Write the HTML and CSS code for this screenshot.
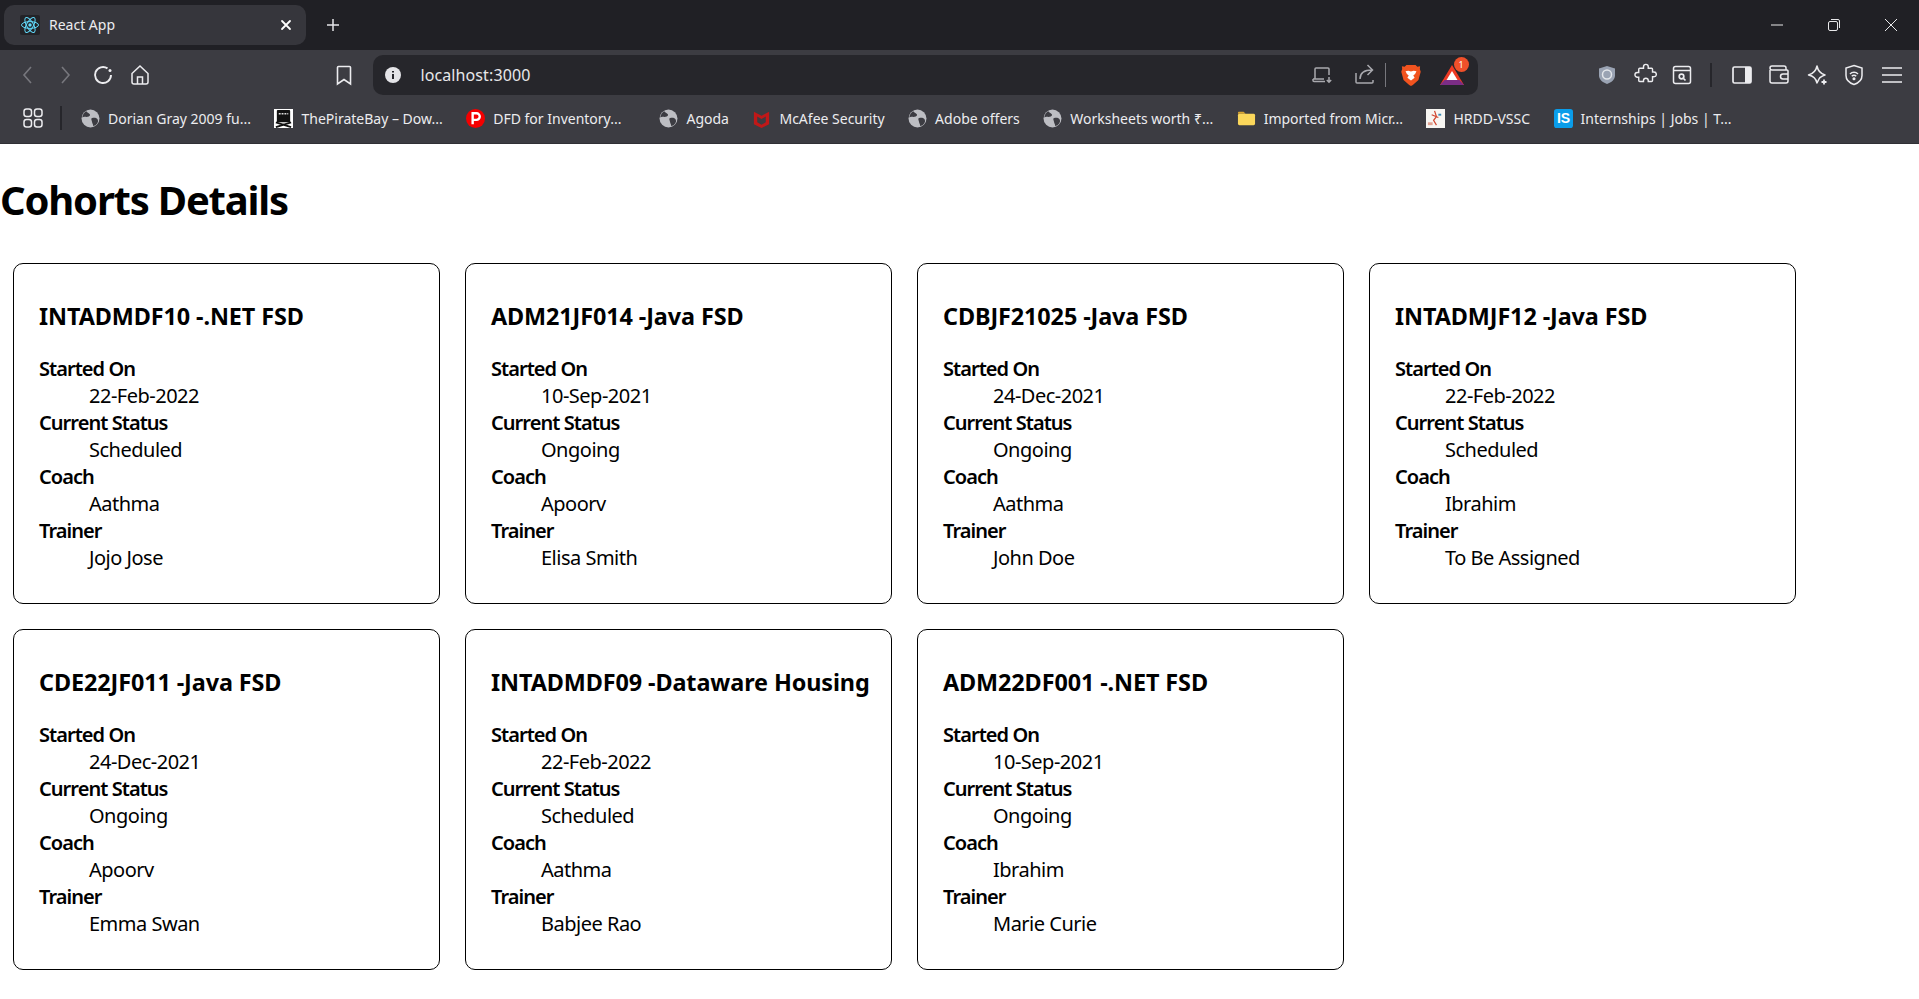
FILE: index.html
```html
<!DOCTYPE html>
<html lang="en">
<head>
<meta charset="utf-8">
<title>React App</title>
<link rel="stylesheet" href="styles.css">
</head>
<body>
<svg class="defs" width="0" height="0" aria-hidden="true">
  <symbol id="globe" viewBox="0 0 18 18">
    <circle cx="9" cy="9" r="8.5" fill="#bdbec3"/>
    <path d="M5 2.2C6 4 8 4 8.5 5.2S7 7.5 5.5 7.5 2.5 7 1.2 8C1.5 5.5 3 3.4 5 2.2ZM10.5 8.5c2-.5 4-.3 5 1 .6.8.8 1.8.5 2.8-.8 2-2.300 3.300-4.500 4 .4-1.500-.8-2.300-1-3.800-.1-1.500-1.500-3.400 0-4Z" fill="#3c3c42"/>
  </symbol>
</svg>
<header class="browser">
  <div class="titlebar">
    <div class="tab">
      <svg class="favicon" viewBox="0 0 20 20"><rect width="20" height="20" rx="2" fill="#232327"/><g fill="none" stroke="#61dafb" stroke-width="1"><ellipse cx="10" cy="10" rx="8.500" ry="3.400"/><ellipse cx="10" cy="10" rx="8.500" ry="3.400" transform="rotate(60 10 10)"/><ellipse cx="10" cy="10" rx="8.500" ry="3.400" transform="rotate(120 10 10)"/></g><circle cx="10" cy="10" r="1.700" fill="#61dafb"/></svg>
      <span class="tab-title">React App</span>
      <svg class="tab-close" viewBox="0 0 12 12"><path d="M2 2l8 8M10 2l-8 8" stroke="#fff" stroke-width="1.800" stroke-linecap="round"/></svg>
    </div>
    <svg class="new-tab" viewBox="0 0 14 14"><path d="M7 1v12M1 7h12" stroke="#e4e4e8" stroke-width="1.500"/></svg>
    <div class="window-controls">
      <svg viewBox="0 0 14 14"><path d="M1 7h12" stroke="#e8e8ea" stroke-width="1"/></svg>
      <svg viewBox="0 0 14 14" fill="none" stroke="#e8e8ea" stroke-width="1"><rect x="1.500" y="3.500" width="9" height="9" rx="1.500"/><path d="M4 1.500h7a1.500 1.500 0 0 1 1.500 1.500v7"/></svg>
      <svg viewBox="0 0 14 14"><path d="M1 1l12 12M13 1L1 13" stroke="#e8e8ea" stroke-width="1"/></svg>
    </div>
  </div>
  <div class="toolbar">
    <div class="nav-group">
      <span class="slot"><svg viewBox="0 0 24 24" fill="none" stroke="#77777d" stroke-width="1.600"><path d="M15 4l-7 8 7 8"/></svg></span>
      <span class="slot"><svg viewBox="0 0 24 24" fill="none" stroke="#77777d" stroke-width="1.600"><path d="M9 4l7 8-7 8"/></svg></span>
      <span class="slot"><svg viewBox="0 0 24 24" fill="none" stroke="#ececef" stroke-width="1.900"><path d="M20 12a8 8 0 1 1-3.500-6.600"/><circle cx="19" cy="7.500" r="1.500" fill="#ececef" stroke="none"/></svg></span>
      <span class="slot"><svg viewBox="0 0 24 24" fill="none" stroke="#ececef" stroke-width="1.500"><path d="M4 10.500L12 3l8 7.500V19a2 2 0 0 1-2 2H6a2 2 0 0 1-2-2Z"/><path d="M9.500 21v-7h5v7"/></svg></span>
    </div>
    <span class="slot slot-bookmark"><svg viewBox="0 0 24 24" fill="none" stroke="#ececef" stroke-width="1.600"><path d="M6.500 3.500h11a1 1 0 0 1 1 1v16.500L12 16.500 5.500 21V4.500a1 1 0 0 1 1-1Z"/></svg></span>
    <div class="address">
      <svg class="info" viewBox="0 0 18 18"><circle cx="9" cy="9" r="8" fill="#e4e4e8"/><path d="M9 8v5M9 5v1.600" stroke="#26262b" stroke-width="2"/></svg>
      <span class="url">localhost:3000</span>
      <span class="slot"><svg viewBox="0 0 24 24" fill="none" stroke="#a9a9ae" stroke-width="1.500"><path d="M5 16V6a1 1 0 0 1 1-1h12a1 1 0 0 1 1 1v6M3 16v1.500a1 1 0 0 0 1 1h11M3 16h11"/><path d="M19 14v5M16.800 17l2.200 2.200 2.200-2.200"/></svg></span>
      <span class="slot"><svg viewBox="0 0 24 24" fill="none" stroke="#a9a9ae" stroke-width="1.500"><path d="M4 10v9a1 1 0 0 0 1 1h15a1 1 0 0 0 1-1v-2"/><path d="M8 17c0-6 4-9 12-9M15.500 3l5 5-5 5" transform="translate(0 -1)"/></svg></span>
      <span class="addr-sep"></span>
      <svg class="brave" viewBox="0 0 22 24"><path d="M6 1h10l2 2 3-.5-.3 3 1 3-2.500 9L13 23l-2 1-2-1-6.200-5.500-2.500-9 1-3-.3-3L4 3Z" fill="#f1531f"/><path d="M5 8l3-.8 3 1 3-1 3 .8-1.500 3-2 1.500 1.500 2.500-4 3-4-3 1.500-2.500-2-1.500Z" fill="#fff"/></svg>
      <span class="bat">
        <svg viewBox="0 0 26 22"><path d="M13 1L25 21H1Z" fill="#ef3a24"/><path d="M1 21l4.500-5h15L25 21Z" fill="#7b2d86"/><path d="M13 7l5.500 9h-11Z" fill="#fff"/></svg>
        <span class="badge">1</span>
      </span>
    </div>
    <div class="tools">
      <span class="slot"><svg viewBox="0 0 24 24"><path d="M12 3l8 2.500v7c0 4-3.500 7-8 8.500-4.500-1.500-8-4.500-8-8.500v-7Z" fill="#9aa3b3"/><circle cx="12" cy="11.500" r="4.500" fill="none" stroke="#e3e6ea" stroke-width="1.500"/></svg></span>
      <span class="slot"><svg viewBox="0 0 24 24" fill="none" stroke="#ececef" stroke-width="1.500"><path d="M10 4.500a2.500 2.500 0 0 1 5 0V6h3.500a1 1 0 0 1 1 1v3H21a2.500 2.500 0 0 1 0 5h-1.500v4a1 1 0 0 1-1 1H15v-1a2.500 2.500 0 0 0-5 0v1H6a1 1 0 0 1-1-1v-3.500H3.500a2.500 2.500 0 0 1 0-5H5V7a1 1 0 0 1 1-1h4Z" transform="translate(1 -.5) scale(.95)"/></svg></span>
      <span class="slot"><svg viewBox="0 0 24 24" fill="none" stroke="#ececef" stroke-width="1.500"><rect x="3.500" y="3.500" width="17" height="17" rx="2"/><path d="M3.500 7.500h17"/><circle cx="11.500" cy="13.500" r="2.300" stroke-width="1.700"/><path d="M13.500 15.500l2 2" stroke-width="1.700"/></svg></span>
      <span class="tool-sep"></span>
      <span class="slot"><svg viewBox="0 0 24 24"><path d="M15 4h5a1 1 0 0 1 1 1v14a1 1 0 0 1-1 1h-5Z" fill="#ececef"/><rect x="3" y="4" width="18" height="16" rx="1.500" fill="none" stroke="#ececef" stroke-width="1.700"/></svg></span>
      <span class="slot"><svg viewBox="0 0 24 24" fill="none" stroke="#ececef" stroke-width="1.500"><path d="M3 7v11a2 2 0 0 0 2 2h14a2 2 0 0 0 2-2V8a1 1 0 0 0-1-1H5a2 2 0 0 1-2-2 2 2 0 0 1 2-2h12a2 2 0 0 1 2 2v2"/><path d="M21 11h-5a2 2 0 0 0 0 5h5"/></svg></span>
      <span class="slot"><svg viewBox="0 0 24 24" fill="none" stroke="#ececef" stroke-width="1.500"><path d="M12 3c1 5 3 7.500 8 9-3 1-5 2-6 4l-2 4c-1-5-3.500-7-8.500-8 5-1.500 7.500-4 8.500-9Z" stroke-linejoin="round"/><path d="M19 16.500v5M16.500 19h5" stroke-width="1.800"/></svg></span>
      <span class="slot"><svg viewBox="0 0 24 24" fill="none" stroke="#ececef" stroke-width="1.500"><path d="M12 2.500l8 2.500v7.500c0 4.500-3.500 7.500-8 9-4.500-1.500-8-4.500-8-9V5Z"/><path d="M8 11a5.500 5.500 0 0 1 8 0M9.800 13.300a3 3 0 0 1 4.400 0"/><circle cx="12" cy="15.800" r=".8" fill="#ececef"/></svg></span>
      <span class="slot"><svg viewBox="0 0 24 24" stroke="#ececef" stroke-width="1.600"><path d="M2 5h20M2 12h20M2 19h20"/></svg></span>
    </div>
  </div>
  <nav class="bookmarks">
    <svg class="apps" viewBox="0 0 22 22" fill="none" stroke="#ececef" stroke-width="1.500"><rect x="2" y="2" width="7.500" height="7.500" rx="2.500"/><rect x="12.500" y="2" width="7.500" height="7.500" rx="2.500"/><rect x="2" y="12.500" width="7.500" height="7.500" rx="2.500"/><rect x="12.500" y="12.500" width="7.500" height="7.500" rx="2.500"/></svg>
    <span class="bm-sep"></span>
    <a class="bm"><svg><use href="#globe"/></svg><span>Dorian Gray 2009 fu...</span></a>
    <a class="bm"><svg viewBox="0 0 20 20"><rect width="20" height="20" fill="#fff"/><rect x="3" y="1" width="14" height="13" rx="1" fill="#111"/><path d="M5 5h10" stroke="#ddd" stroke-dasharray="2 1" stroke-width="1.500"/><path d="M2 14l16 5M18 14L2 19" stroke="#111" stroke-width="2"/></svg><span>ThePirateBay – Dow...</span></a>
    <a class="bm bm-wide"><svg viewBox="0 0 20 20"><circle cx="10" cy="10" r="10" fill="#f40000"/><path d="M7 16V4.500h4a3.500 3.500 0 0 1 0 7H7" fill="none" stroke="#fff" stroke-width="2.500"/></svg><span>DFD for Inventory...</span></a>
    <a class="bm"><svg><use href="#globe"/></svg><span>Agoda</span></a>
    <a class="bm"><svg viewBox="0 0 20 20"><path d="M2 3l8 4 8-4v13l-8 4-8-4Z" fill="#c01818"/><path d="M5.500 8l4.500 2.500L14.500 8v6L10 16.500 5.500 14Z" fill="#3c3c42"/></svg><span>McAfee Security</span></a>
    <a class="bm"><svg><use href="#globe"/></svg><span>Adobe offers</span></a>
    <a class="bm"><svg><use href="#globe"/></svg><span>Worksheets worth ₹...</span></a>
    <a class="bm"><svg viewBox="0 0 20 20"><path d="M1 4a1 1 0 0 1 1-1h5l2 2h-8Z" fill="#d9a531"/><rect x="1" y="5" width="18" height="12" rx="1.500" fill="#fbd75b"/></svg><span>Imported from Micr...</span></a>
    <a class="bm"><svg viewBox="0 0 20 20"><rect width="20" height="20" fill="#f7f5f2"/><path d="M9 2l2 6-3 4 3 5M6 6l7 3" stroke="#d1452f" stroke-width="1.300" fill="none"/><path d="M2 14h5v3H2Z" fill="#e0a090"/><path d="M13 5h3v2h-3Z" fill="#3a8bb5"/></svg><span>HRDD-VSSC</span></a>
    <a class="bm"><svg class="is-icon" viewBox="0 0 20 20"><rect width="20" height="20" rx="3" fill="#0a9dea"/></svg><span class="is-mark">IS</span><span>Internships | Jobs | T...</span></a>
  </nav>
</header>
<main class="page">
  <h1 class="page-title">Cohorts Details</h1>
  <section class="cohorts">
    <article class="card"><h3>INTADMDF10 -.NET FSD</h3><dl><dt>Started On</dt><dd>22-Feb-2022</dd><dt>Current Status</dt><dd>Scheduled</dd><dt>Coach</dt><dd>Aathma</dd><dt>Trainer</dt><dd>Jojo Jose</dd></dl></article>
    <article class="card"><h3>ADM21JF014 -Java FSD</h3><dl><dt>Started On</dt><dd>10-Sep-2021</dd><dt>Current Status</dt><dd>Ongoing</dd><dt>Coach</dt><dd>Apoorv</dd><dt>Trainer</dt><dd>Elisa Smith</dd></dl></article>
    <article class="card"><h3>CDBJF21025 -Java FSD</h3><dl><dt>Started On</dt><dd>24-Dec-2021</dd><dt>Current Status</dt><dd>Ongoing</dd><dt>Coach</dt><dd>Aathma</dd><dt>Trainer</dt><dd>John Doe</dd></dl></article>
    <article class="card"><h3>INTADMJF12 -Java FSD</h3><dl><dt>Started On</dt><dd>22-Feb-2022</dd><dt>Current Status</dt><dd>Scheduled</dd><dt>Coach</dt><dd>Ibrahim</dd><dt>Trainer</dt><dd>To Be Assigned</dd></dl></article>
    <article class="card"><h3>CDE22JF011 -Java FSD</h3><dl><dt>Started On</dt><dd>24-Dec-2021</dd><dt>Current Status</dt><dd>Ongoing</dd><dt>Coach</dt><dd>Apoorv</dd><dt>Trainer</dt><dd>Emma Swan</dd></dl></article>
    <article class="card"><h3>INTADMDF09 -Dataware Housing</h3><dl><dt>Started On</dt><dd>22-Feb-2022</dd><dt>Current Status</dt><dd>Scheduled</dd><dt>Coach</dt><dd>Aathma</dd><dt>Trainer</dt><dd>Babjee Rao</dd></dl></article>
    <article class="card"><h3>ADM22DF001 -.NET FSD</h3><dl><dt>Started On</dt><dd>10-Sep-2021</dd><dt>Current Status</dt><dd>Ongoing</dd><dt>Coach</dt><dd>Ibrahim</dd><dt>Trainer</dt><dd>Marie Curie</dd></dl></article>
  </section>
</main>
</body>
</html>
```
FILE: styles.css
```css
* { box-sizing: border-box; }
html, body { margin: 0; padding: 0; }
body {
  background: #fff;
  color: #000;
  font-family: "Noto Sans", "Open Sans", sans-serif;
  font-size: 20px;
  overflow: hidden;
}
.defs { position: absolute; }

.browser { color: #ececef; font-size: 14px; }
.titlebar {
  height: 50px;
  background: #202025;
  display: flex;
  align-items: center;
  padding-left: 4px;
}
.tab {
  width: 302px;
  height: 40px;
  background: #36363c;
  border-radius: 10px;
  display: flex;
  align-items: center;
  padding: 0 14px 0 16px;
}
.favicon { width: 20px; height: 20px; flex: none; }
.tab-title { margin: -2px 0 0 9px; flex: 1; font-size: 14px; }
.tab-close { width: 12px; height: 12px; }
.new-tab { width: 14px; height: 14px; margin-left: 20px; }
.window-controls {
  margin-left: auto;
  display: flex;
  gap: 43px;
  padding-right: 21px;
}
.window-controls svg { width: 14px; height: 14px; }

.toolbar {
  height: 45px;
  background: #3c3c42;
  display: flex;
  align-items: center;
  padding: 5px 0 0 9px;
}
.slot {
  width: 37.5px;
  height: 24px;
  flex: none;
  display: flex;
  justify-content: center;
}
.slot svg { width: 24px; height: 24px; }
.nav-group { display: flex; }
.slot-bookmark { margin-left: 166px; }
.address {
  width: 1105px;
  height: 40px;
  margin-left: 10px;
  background: #26262b;
  border-radius: 10px;
  display: flex;
  align-items: center;
  padding-left: 11px;
}
.info { width: 18px; height: 18px; flex: none; }
.url {
  margin-left: 19px;
  flex: 1;
  font-size: 16px;
  letter-spacing: .1px;
  color: #e8e8ea;
}
.address .slot { width: 42px; }
.addr-sep { width: 1px; height: 24px; background: #77777d; margin: 0 15px 0 0; }
.brave { width: 20px; height: 24px; }
.bat { position: relative; width: 26px; height: 22px; margin: 0 13px 0 18px; }
.bat svg { width: 26px; height: 22px; display: block; }
.badge {
  position: absolute;
  top: -7px;
  right: -4px;
  width: 15px;
  height: 15px;
  border-radius: 50%;
  background: #f0502a;
  color: #fff;
  font-size: 9px;
  line-height: 15px;
  text-align: center;
}
.tools { display: flex; align-items: center; margin-left: 111px; }
.tool-sep { width: 2px; height: 24px; background: #26262b; margin: 0 11px 0 9px; }

.bookmarks {
  height: 49px;
  background: #3c3c42;
  border-bottom: 1px solid #303035;
  display: flex;
  align-items: center;
  padding: 0 0 2px 22px;
  font-size: 14px;
}
.apps { width: 22px; height: 22px; flex: none; }
.bm-sep { width: 2px; height: 24px; background: #26262b; margin: 0 19px 0 16px; }
.bm {
  display: flex;
  align-items: center;
  gap: 8px;
  margin-right: 23.5px;
  position: relative;
  white-space: nowrap;
  color: #ececef;
}
.bm svg { width: 19px; height: 19px; flex: none; }
.bm-wide { margin-right: 38px; }
.is-mark {
  position: absolute;
  left: 2px;
  width: 16px;
  text-align: center;
  color: #fff;
  font-family: "Liberation Sans", sans-serif;
  font-weight: 700;
  font-size: 14px;
}

.page-title {
  margin: 29px 0 28px;
  font-size: 40px;
  line-height: 53px;
  font-weight: 700;
  letter-spacing: -1.2px;
}
.cohorts {
  display: flex;
  flex-wrap: wrap;
  gap: 25px;
  padding: 9px 13px;
}
.card {
  width: 427px;
  height: 341px;
  border: 1px solid #000;
  border-radius: 10px;
  padding: 12px 25px;
}
.card h3 {
  margin: 24px 0 23px;
  font-size: 23.4px;
  line-height: 32px;
  font-weight: 700;
  letter-spacing: -.1px;
  white-space: nowrap;
}
.card dl { margin: 0; line-height: 27px; }
.card dt { font-weight: 600; letter-spacing: -.95px; }
.card dd { margin-left: 50px; letter-spacing: -.5px; }
```
